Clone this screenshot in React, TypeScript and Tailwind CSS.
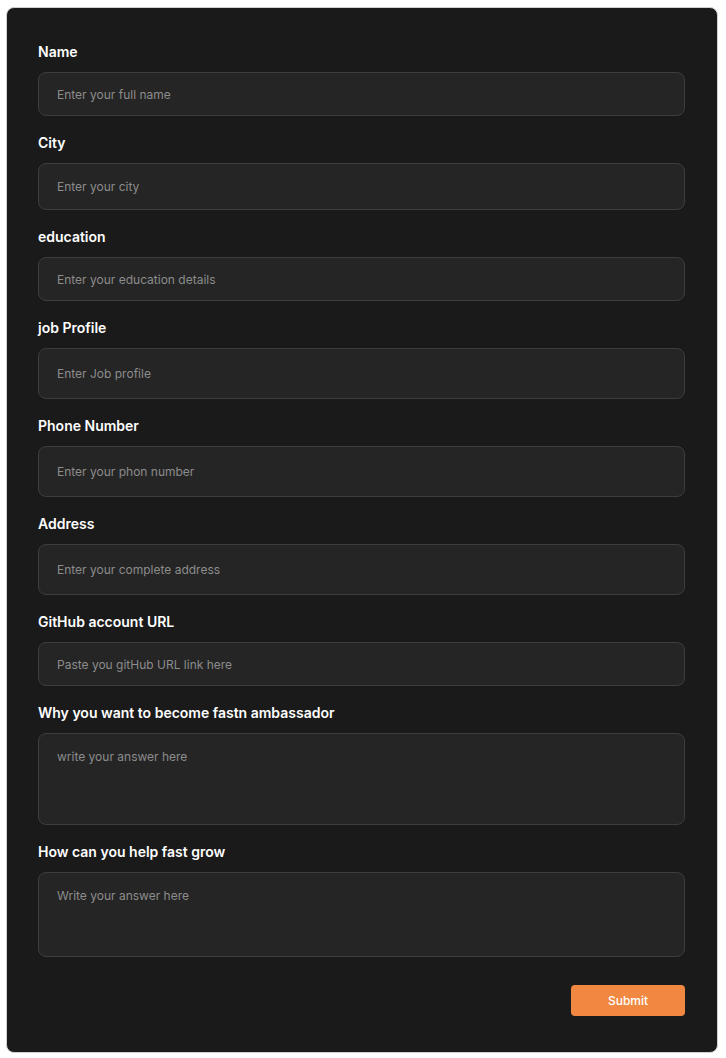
import React from 'react';

const fields = [
    { label: 'Name', placeholder: 'Enter your full name', h: 'h-[44px]' },
    { label: 'City', placeholder: 'Enter your city', h: 'h-[47px]' },
    { label: 'education', placeholder: 'Enter your education details', h: 'h-[44px]' },
    { label: 'job Profile', placeholder: 'Enter Job profile', h: 'h-[51px]' },
    { label: 'Phone Number', placeholder: 'Enter your phon number', h: 'h-[51px]' },
    { label: 'Address', placeholder: 'Enter your complete address', h: 'h-[51px]' },
    { label: 'GitHub account URL', placeholder: 'Paste you gitHub URL link here', h: 'h-[44px]' },
];

const areas = [
    { label: 'Why you want to become fastn ambassador', placeholder: 'write your answer here', h: 'h-[92px]' },
    { label: 'How can you help fast grow', placeholder: 'Write your answer here', h: 'h-[85px]' },
];

export default function App() {
    return (
        <div className="min-h-screen bg-white pt-[7px] pl-[6px] pr-[8px] pb-[6px]" style={{ fontFamily: 'Inter, "Noto Sans", sans-serif' }}>
            <form className="bg-[#1a1a1a] rounded-lg border border-[#d0d0d0] pl-[31px] pr-[32px] pt-[34px] pb-[36px] flex flex-col gap-[17px]">
                {fields.map((f) => (
                    <div key={f.label} className="flex flex-col gap-[10px]">
                        <label className="text-white text-sm font-semibold leading-5">{f.label}</label>
                        <input
                            type="text"
                            placeholder={f.placeholder}
                            className={`${f.h} w-full rounded-lg border border-[#3d3d3d] bg-[#252525] px-[18px] text-xs text-white placeholder:text-[#8c8c8c] outline-none`}
                        />
                    </div>
                ))}
                {areas.map((f) => (
                    <div key={f.label} className="flex flex-col gap-[10px]">
                        <label className="text-white text-sm font-semibold leading-5">{f.label}</label>
                        <textarea
                            placeholder={f.placeholder}
                            className={`${f.h} w-full resize-none rounded-lg border border-[#3d3d3d] bg-[#252525] px-[18px] pt-[15px] text-xs text-white placeholder:text-[#8c8c8c] outline-none`}
                        />
                    </div>
                ))}
                <div className="flex justify-end mt-[11px]">
                    <button type="button" className="w-[114px] h-[31px] rounded-[4px] bg-[#f18842] text-white text-xs font-medium">
                        Submit
                    </button>
                </div>
            </form>
        </div>
    );
}
